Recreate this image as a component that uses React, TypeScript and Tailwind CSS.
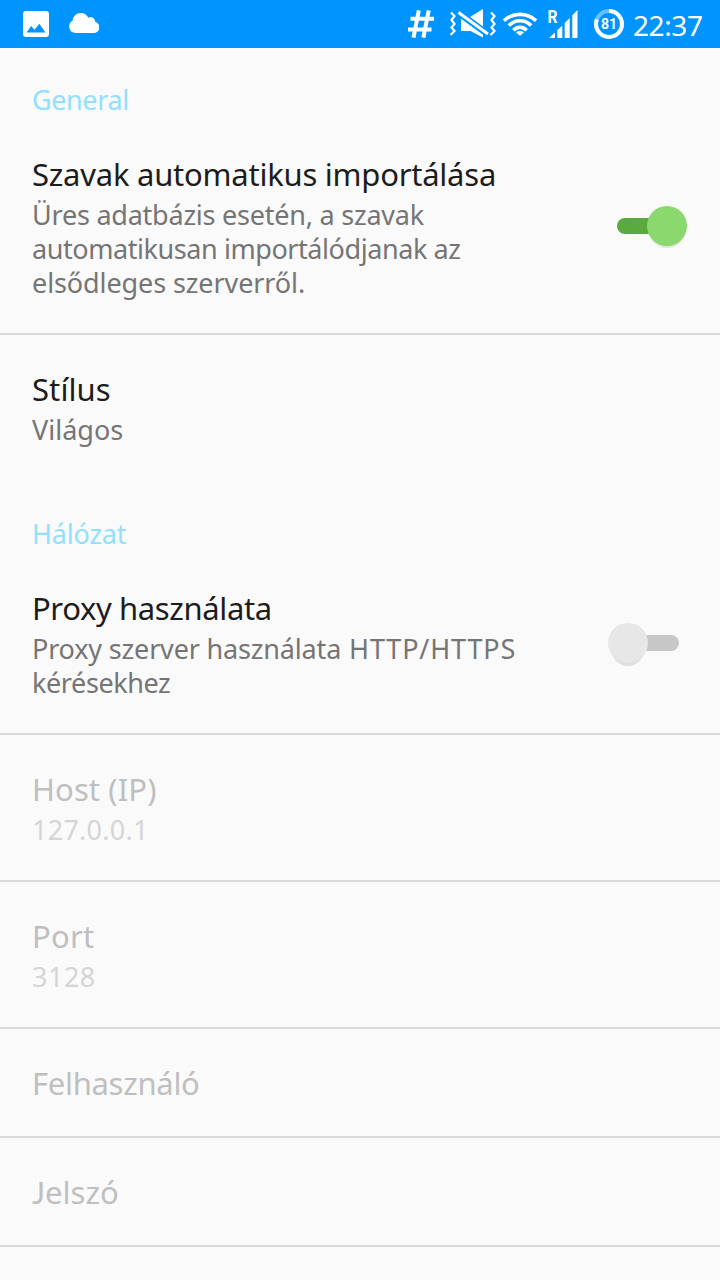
import React from "react";
import clsx from "clsx";

interface Line {
  text: string;
  acronym?: string;
  className?: string;
}

interface PreferenceProps {
  title: Line;
  summary?: Line[];
  disabled?: boolean;
  divider?: boolean;
  children?: React.ReactNode;
}

const StatusBar: React.FC = () => (
  <header className="flex h-12 items-center bg-[#0094ff] text-white">
    {/* Notifications */}
    <svg className="ml-[23px] h-12 w-[26px]" viewBox="23 0 26 48" fill="currentColor">
      <path
        fillRule="evenodd"
        d="M26 11h20a3 3 0 0 1 3 3v20a3 3 0 0 1-3 3H26a3 3 0 0 1-3-3V14a3 3 0 0 1 3-3ZM26.500 32.500h19l-6.200-8.700-4.800 6-3.300-3.800Z"
      />
    </svg>
    <svg className="ml-5 h-12 w-[30px]" viewBox="69 0 30 48" fill="currentColor">
      <path d="M75.500 33a6.500 6.500 0 0 1-2.900-12.200C72.800 16.400 76.400 13 80.800 13c3.300 0 6.200 1.900 7.500 4.700a4.600 4.600 0 0 1 6.900 4.100A5.700 5.700 0 0 1 93.300 33Z" />
    </svg>

    {/* System icons */}
    <svg className="ml-auto h-12 w-[27px]" viewBox="408 0 27 48" fill="none" stroke="currentColor" strokeWidth="4">
      <path d="M418.800 10.300 413.500 37.700M428.700 10.300 423.400 37.700M410.500 18.700H434M408 29.500H431.500" />
    </svg>
    <svg className="ml-[15px] h-12 w-[47px]" viewBox="450 0 47 48" fill="none" stroke="currentColor">
      <path
        strokeWidth="2.200"
        d="M451 12.500 454.500 16 451.500 20 454.500 24 451.500 27.500 454.500 31 450.500 35M491 12.500 494.500 16 491.500 20 494.500 24 491.500 27.500 494.500 31 490.500 35"
      />
      <path strokeWidth="3" d="M458.500 12.500 488 34" />
      <path fill="currentColor" stroke="none" d="M470 17 483 9V26.500ZM461 18.800 483 34.800V37.500L470.500 31H461Z" />
    </svg>
    <svg className="ml-[6.500px] h-12 w-[34px]" viewBox="503 0 34 48" fill="none" stroke="currentColor" strokeWidth="3.600">
      <path d="M504 20.700C513 12.200 527 12.200 536 20.700M508.800 25.500C515.500 19.200 524.500 19.200 531.200 25.500M513.300 30.200C517.300 26.400 522.700 26.400 526.700 30.200" />
      <path fill="currentColor" stroke="none" d="M520 35.800 515.800 32.300Q520 29.300 524.200 32.300Z" />
    </svg>
    <svg className="ml-[11px] h-12 w-[30px]" viewBox="548 0 30 48" fill="currentColor">
      <text x="547.500" y="23" fontSize="18" fontWeight="700" textLength="10" lengthAdjust="spacingAndGlyphs" className="font-['Roboto',sans-serif]">
        R
      </text>
      <path d="M549 38 555 32.500V38ZM557.300 30.300 562.300 25.500V38H557.300ZM564.700 23 569.700 18V38H564.700ZM572.300 15.300 577.500 10V38H572.300Z" />
    </svg>
    <svg className="ml-4 h-12 w-[30px]" viewBox="594 0 30 48" fill="none">
      <circle cx="609" cy="24" r="13" stroke="#66bfff" strokeWidth="4" />
      <circle
        cx="609"
        cy="24"
        r="13"
        stroke="currentColor"
        strokeWidth="4"
        pathLength="100"
        strokeDasharray="81 19"
        transform="rotate(-90 609 24)"
      />
      <text x="609" y="29.300" fontSize="14" fontWeight="700" fill="currentColor" textAnchor="middle" className="font-['Roboto',sans-serif]">
        81
      </text>
    </svg>
    <time className="ml-[9px] w-[87px] pt-px text-[28px] leading-[48px] tracking-[-0.4px]">22:37</time>
  </header>
);

const Category: React.FC<{ label: string; className: string }> = ({ label, className }) => (
  <h2 className={clsx("flex items-end px-8 text-[27px] leading-10 text-[#92e0ff]", className)}>
    {label}
  </h2>
);

const Preference: React.FC<PreferenceProps> = ({
  title,
  summary = [],
  disabled = false,
  divider = true,
  children,
}) => (
  <section
    className={clsx(
      "flex items-center justify-between pt-[33px] pb-[31px] pl-8",
      divider && "border-b-2 border-[#dadada]"
    )}
  >
    <div>
      <h3
        className={clsx(
          "text-[31px] leading-[43px] whitespace-nowrap",
          disabled ? "text-[#bfbfbf]" : "text-[#1c1c1c]",
          title.className
        )}
      >
        {title.text}
      </h3>
      {summary.length > 0 && (
        <div
          className={clsx(
            "mt-0.5 mb-0.5 text-[27px] leading-[34px] whitespace-nowrap",
            disabled ? "text-[#d5d5d5]" : "text-[#757575]"
          )}
        >
          {summary.map((line) => (
            <p key={line.text} className={line.className}>
              {line.text}
              {line.acronym && <span className="tracking-[0.85px]"> {line.acronym}</span>}
            </p>
          ))}
        </div>
      )}
    </div>
    {children}
  </section>
);

const Toggle: React.FC<{ checked: boolean }> = ({ checked }) => (
  <div
    role="switch"
    aria-checked={checked}
    className={clsx(
      "relative mr-[41px] mb-1 h-4 w-[62px] rounded-full",
      checked ? "bg-[#5aaa3f]" : "bg-[#c7c7c7]"
    )}
  >
    <div
      className={clsx(
        "absolute -top-3 size-10 rounded-full",
        checked
          ? "left-[30px] bg-[#8ad86e] shadow-[0_4px_1px_-2px_#dfe5dd]"
          : "-left-[9px] bg-[#e7e7e7] shadow-[0_7px_1px_-4px_#dedede]"
      )}
    />
  </div>
);

export default function App() {
  return (
    <main className="h-[1280px] w-[720px] overflow-hidden bg-[#fafafa] font-['Noto_Sans',sans-serif]">
      <StatusBar />

      <Category label="General" className="h-[72px] tracking-[-0.4px]" />
      <Preference
        title={{ text: "Szavak automatikus importálása", className: "tracking-[-0.24px]" }}
        summary={[
          { text: "Üres adatbázis esetén, a szavak", className: "tracking-[-0.23px]" },
          { text: "automatikusan importálódjanak az", className: "tracking-[-0.43px]" },
          { text: "elsődleges szerverről.", className: "tracking-[-0.1px]" },
        ]}
      >
        <Toggle checked />
      </Preference>
      <Preference
        title={{ text: "Stílus", className: "tracking-[0.1px]" }}
        summary={[{ text: "Világos" }]}
        divider={false}
      />

      <Category label="Hálózat" className="h-[74px] tracking-[-0.2px]" />
      <Preference
        title={{ text: "Proxy használata", className: "tracking-[-0.38px]" }}
        summary={[
          {
            text: "Proxy szerver használata",
            acronym: "HTTP/HTTPS",
            className: "tracking-[-0.17px]",
          },
          { text: "kérésekhez", className: "tracking-[-0.4px]" },
        ]}
      >
        <Toggle checked={false} />
      </Preference>
      <Preference
        title={{ text: "Host (IP)", className: "tracking-[0.1px]" }}
        summary={[{ text: "127.0.0.1", className: "tracking-[0.25px]" }]}
        disabled
      />
      <Preference
        title={{ text: "Port", className: "tracking-[0.2px]" }}
        summary={[{ text: "3128", className: "tracking-[0.5px]" }]}
        disabled
      />
      <Preference title={{ text: "Felhasználó", className: "tracking-[-0.3px]" }} disabled />
      <Preference
        title={{ text: "Jelszó", className: "first-letter:font-['Lato',sans-serif]" }}
        disabled
      />
    </main>
  );
}
